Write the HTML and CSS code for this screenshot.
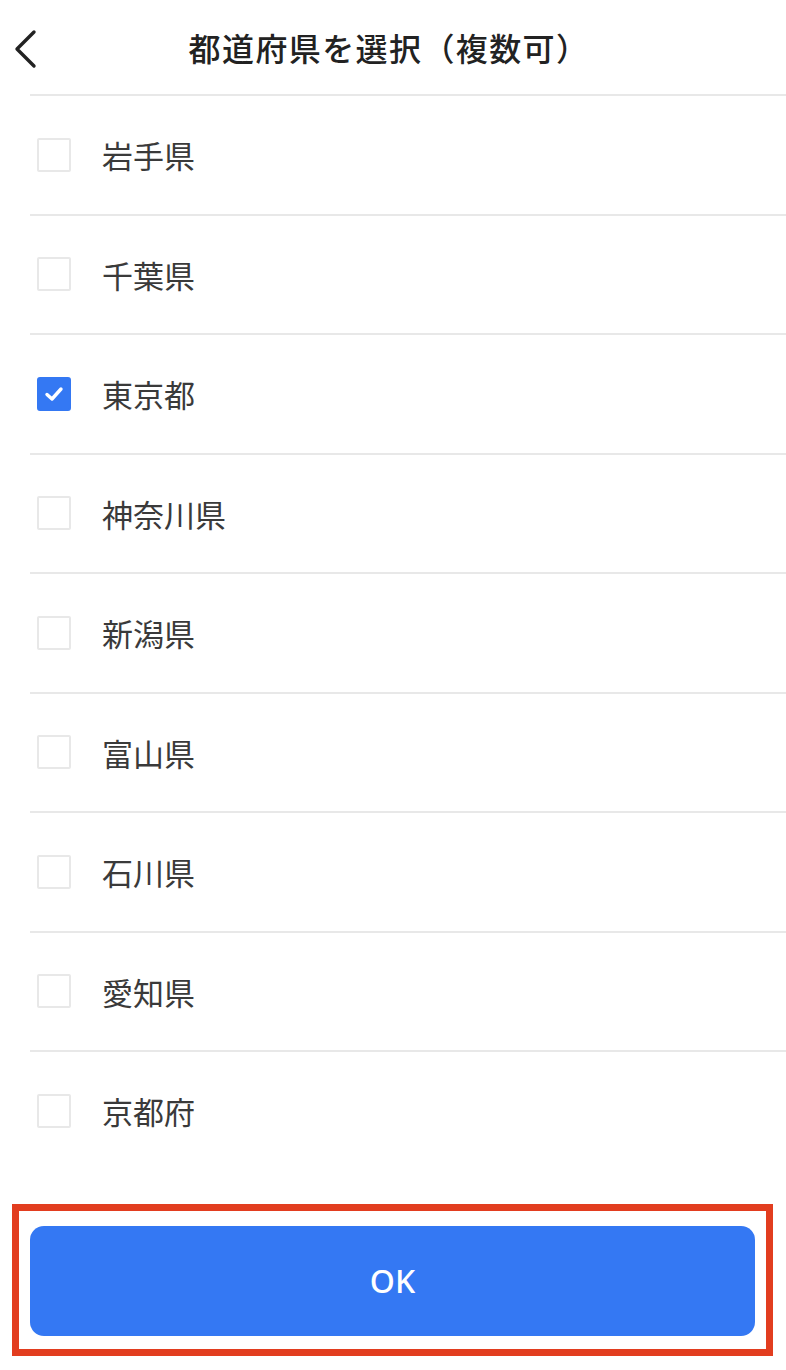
FILE: index.html
```html
<html>
  <head>
    <link rel="stylesheet" href="styles.css">
    <title>都道府県を選択</title>
  </head>
  <body>
    <div class="header">
      <a class="back" href="#">
        <svg width="30" height="40" viewBox="0 0 30 40"><path d="M24 3 L7 20 L24 37" fill="none" stroke="#222" stroke-width="3.4" stroke-linecap="round" stroke-linejoin="round"/></svg>
      </a>
      <h1 class="title">都道府県を選択（複数可）</h1>
    </div>
    <ul class="list">
      <li class="row"><span class="box"></span><span class="label">岩手県</span></li>
      <li class="row"><span class="box"></span><span class="label">千葉県</span></li>
      <li class="row"><span class="box checked"><svg width="20" height="16" viewBox="0 0 20 16"><path d="M3 8.5 L8 13 L17 3" fill="none" stroke="#fff" stroke-width="3.4" stroke-linecap="round" stroke-linejoin="round"/></svg></span><span class="label">東京都</span></li>
      <li class="row"><span class="box"></span><span class="label">神奈川県</span></li>
      <li class="row"><span class="box"></span><span class="label">新潟県</span></li>
      <li class="row"><span class="box"></span><span class="label">富山県</span></li>
      <li class="row"><span class="box"></span><span class="label">石川県</span></li>
      <li class="row"><span class="box"></span><span class="label">愛知県</span></li>
      <li class="row"><span class="box"></span><span class="label">京都府</span></li>
    </ul>
    <div class="footer">
      <button class="ok">OK</button>
    </div>
  </body>
</html>
```
FILE: styles.css
```css
body {
  margin: 0;
  background: #fff;
  font-family: "Noto Sans CJK JP", "Noto Sans", sans-serif;
  color: #333;
}

.header {
  position: relative;
  height: 94px;
  display: flex;
  align-items: center;
  justify-content: center;
}
.back {
  position: absolute;
  left: 10px;
  top: 29px;
  display: block;
}
.title {
  margin: 0 8px 0 0;
  font-size: 32px;
  font-weight: 500;
  color: #222;
  letter-spacing: 1.4px;
}

.list {
  list-style: none;
  margin: 0 0 0 30px;
  padding: 0;
}
.row {
  border-top: 2px solid #e8e8e8;
  height: 117.5px;
  display: flex;
  align-items: center;
}
.box {
  box-sizing: border-box;
  width: 34px;
  height: 34px;
  margin-left: 7px;
  border: 2px solid #e8e8e8;
  border-radius: 2px;
  display: flex;
  align-items: center;
  justify-content: center;
}
.box.checked {
  background: #3478f3;
  border-color: #3478f3;
  border-radius: 3px;
}
.label {
  margin-left: 31px;
  font-size: 31px;
  color: #3a3a3a;
}

.footer {
  margin: 34px 13px 0 12px;
  border: 7px solid #e23d1f;
  padding: 15px 11px 13px 11px;
}
.ok {
  display: block;
  width: 100%;
  height: 110px;
  border: none;
  border-radius: 14px;
  background: #3478f3;
  color: #fff;
  font-family: "Noto Sans", sans-serif;
  font-size: 32px;
  font-weight: 500;
}
```
